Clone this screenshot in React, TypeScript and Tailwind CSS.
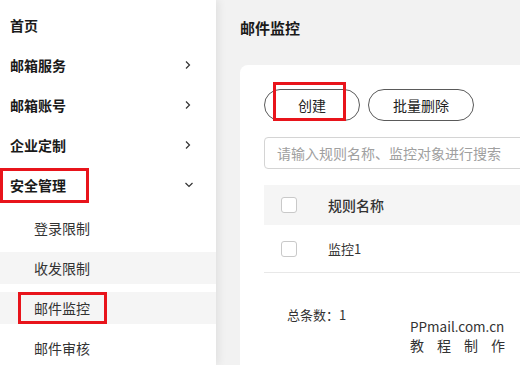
import React from "react";

const font = { fontFamily: '"Noto Sans CJK SC", "Noto Sans", sans-serif' };

function ChevronRight() {
  return (
    <svg width="8" height="10" viewBox="0 0 8 10" className="text-[#333]">
      <path d="M2 1.5 L5.5 5 L2 8.5" fill="none" stroke="currentColor" strokeWidth="1.2" />
    </svg>
  );
}
function ChevronDown() {
  return (
    <svg width="10" height="8" viewBox="0 0 10 8" className="text-[#333]">
      <path d="M1.5 2 L5 5.5 L8.5 2" fill="none" stroke="currentColor" strokeWidth="1.2" />
    </svg>
  );
}

function Checkbox() {
  return <div className="h-[16px] w-[16px] rounded-[3px] border border-[#c9c9c9] bg-white" />;
}

export default function App() {
  const top = [
    { t: "首页", c: false },
    { t: "邮箱服务", c: true },
    { t: "邮箱账号", c: true },
    { t: "企业定制", c: true },
  ];
  return (
    <div className="flex h-[365px] w-[520px] overflow-hidden bg-[#f2f2f2]" style={font}>
      <div className="relative z-10 flex w-[216px] shrink-0 flex-col bg-white pt-[5px] shadow-[3px_0_8px_rgba(0,0,0,0.07)]">
        {top.map((it) => (
          <div key={it.t} className="flex h-[40px] items-center justify-between pl-[10px] pr-[24px]">
            <span className="text-[14px] font-bold text-[#1a1a1a]">{it.t}</span>
            {it.c && <ChevronRight />}
          </div>
        ))}
        <div className="flex h-[40px] items-center justify-between pr-[22px]">
          <span className="box-border flex h-[35px] items-center border-[3px] border-[#e8141b] pl-[7px] pr-[20px] text-[14px] font-bold text-[#1a1a1a]">
            安全管理
          </span>
          <ChevronDown />
        </div>
        <div className="mt-[7px] flex h-[32px] items-center pl-[34px] text-[14px] text-[#333]">登录限制</div>
        <div className="mt-[8px] flex h-[32px] items-center bg-[#f5f5f5] pl-[34px] text-[14px] text-[#333]">收发限制</div>
        <div className="mt-[8px] flex h-[32px] items-center bg-[#f5f5f5] pl-[18px] text-[14px] text-[#333]">
          <span className="box-border flex h-[32px] items-center border-[3px] border-[#e8141b] pl-[13px] pr-[14px]">邮件监控</span>
        </div>
        <div className="mt-[8px] flex h-[32px] items-center pl-[34px] text-[14px] text-[#333]">邮件审核</div>
      </div>
      <div className="relative flex min-w-0 flex-1 flex-col pl-[24px]">
        <div className="flex h-[56px] items-center text-[15px] font-bold text-[#1a1a1a]">邮件监控</div>
        <div className="mt-[9px] flex flex-1 flex-col rounded-tl-[8px] bg-white pl-[24px] pt-[24px]">
          <div className="flex gap-[8px]">
            <button className="relative flex h-[32px] w-[96px] items-center justify-center rounded-full border border-[#5a5a5a] text-[14px] text-[#222]">
              创建
              <span className="absolute left-[8px] top-[-8px] h-[39px] w-[73px] border-[3px] border-[#e8141b]" />
            </button>
            <button className="flex h-[32px] w-[106px] items-center justify-center rounded-full border border-[#5a5a5a] text-[14px] text-[#222]">
              批量删除
            </button>
          </div>
          <div className="mt-[16px] flex h-[32px] w-[400px] shrink-0 items-center rounded-[4px] border border-[#d4d4d4] pl-[12px] text-[14px] text-[#a0a0a0]">
            请输入规则名称、监控对象进行搜索
          </div>
          <div className="mt-[16px] flex h-[40px] shrink-0 items-center bg-[#f5f5f5] pl-[17px]">
            <Checkbox />
            <span className="ml-[31px] text-[14px] font-medium text-[#333]">规则名称</span>
          </div>
          <div className="flex h-[48px] shrink-0 items-center border-b border-[#e8e8e8] pl-[17px]">
            <Checkbox />
            <span className="ml-[31px] text-[13px] text-[#333]">监控1</span>
          </div>
          <div className="mt-[32px] pl-[23px] text-[13px] text-[#333]">总条数：1</div>
        </div>
        <div className="absolute left-[194px] top-[317px] whitespace-nowrap text-[14px] leading-[19px] text-[#333]">
          <div className="text-[13.5px]">PPmail.com.cn</div>
          <div className="tracking-[13px]">教程制作</div>
        </div>
      </div>
    </div>
  );
}
